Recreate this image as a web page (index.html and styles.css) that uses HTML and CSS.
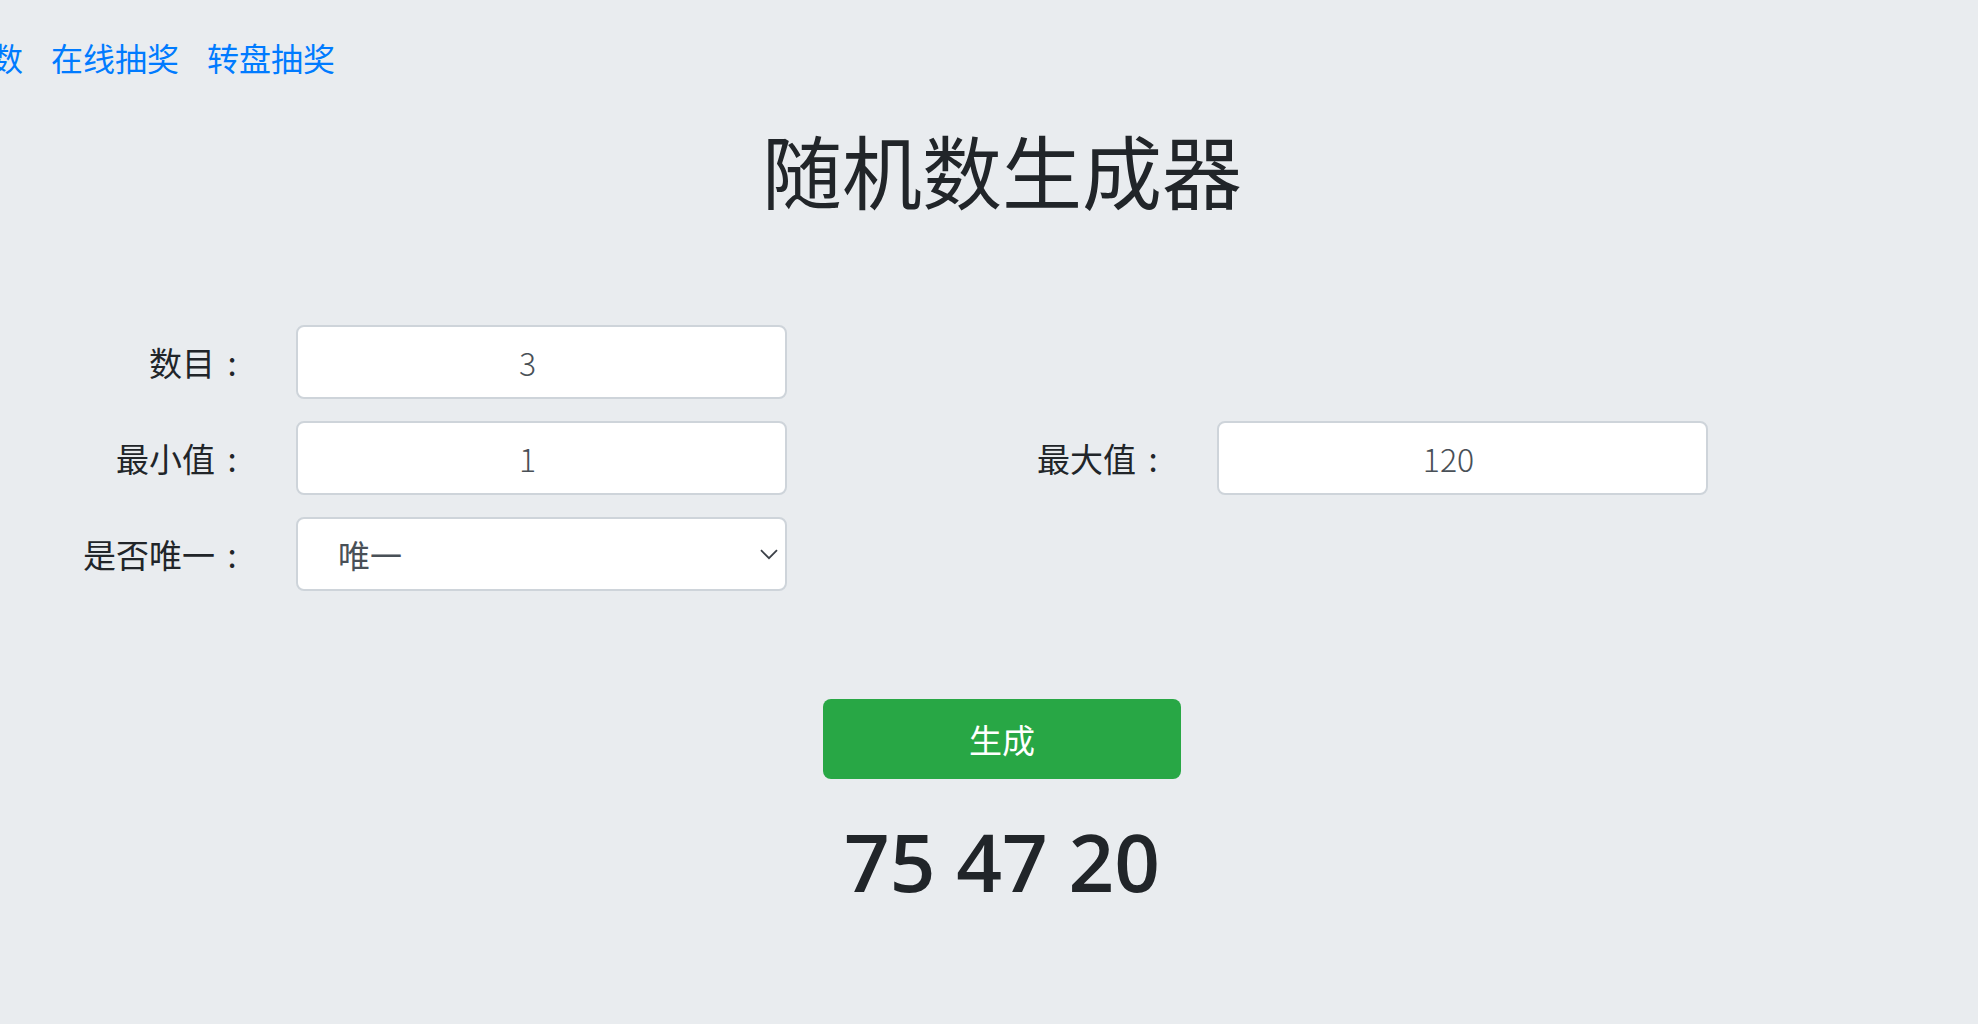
FILE: index.html
```html
<!DOCTYPE html>
<html lang="zh-CN">
<head>
<meta charset="utf-8">
<title>随机数生成器</title>
<link rel="stylesheet" href="styles.css">
</head>
<body>
<div class="page">
  <nav class="nav">
    <a class="nav-link" href="#">随机数</a>
    <a class="nav-link" href="#">在线抽奖</a>
    <a class="nav-link" href="#">转盘抽奖</a>
  </nav>
  <h1 class="title">随机数生成器</h1>
  <form class="form">
    <div class="form-row">
      <div class="field">
        <label class="lbl">数目<span class="colon">:</span></label>
        <input class="ctl num" type="text" value="3">
      </div>
    </div>
    <div class="form-row">
      <div class="field">
        <label class="lbl">最小值<span class="colon">:</span></label>
        <input class="ctl num" type="text" value="1">
      </div>
      <div class="field">
        <label class="lbl">最大值<span class="colon">:</span></label>
        <input class="ctl num" type="text" value="120">
      </div>
    </div>
    <div class="form-row">
      <div class="field">
        <label class="lbl">是否唯一<span class="colon">:</span></label>
        <div class="select-wrap">
          <select class="ctl sel">
            <option>唯一</option>
            <option>不唯一</option>
          </select>
          <svg class="chev" width="18" height="11" viewBox="0 0 18 11"><path d="M1 1.2 L9 9.2 L17 1.2" fill="none" stroke="#3c4148" stroke-width="1.8"/></svg>
        </div>
      </div>
    </div>
  </form>
  <div class="actions">
    <button class="btn" type="button">生成</button>
  </div>
  <div class="result">75 47 20</div>
</div>
</body>
</html>
```
FILE: styles.css
```css
html, body {
  margin: 0;
  padding: 0;
  overflow: hidden;
  background: #e9ecef;
}
body {
  font-family: "Noto Sans CJK SC", "Noto Sans", sans-serif;
  color: #212529;
}
.page {
  width: 2004px;
  height: 1024px;
}
.nav {
  display: flex;
  gap: 28px;
  padding-top: 33px;
  margin-left: -73px;
}
.nav-link {
  font-size: 32px;
  line-height: 48px;
  color: #007bff;
  text-decoration: none;
}
.title {
  margin: 39px 0 0;
  font-size: 80px;
  line-height: 96px;
  font-weight: 400;
  text-align: center;
}
.form {
  margin-top: 109px;
  display: flex;
  flex-direction: column;
  gap: 22px;
}
.form-row {
  display: flex;
  gap: 134px;
}
.field {
  display: flex;
  align-items: center;
  gap: 47px;
}
.lbl {
  width: 249px;
  text-align: right;
  font-size: 33px;
  line-height: 48px;
  color: #212529;
}
.colon {
  display: inline-block;
  width: 34px;
  text-align: center;
}
.ctl {
  box-sizing: border-box;
  width: 491px;
  height: 74px;
  margin: 0;
  border: 2px solid #ced4da;
  border-radius: 8px;
  background: #fff;
  font-family: "Noto Sans CJK SC", sans-serif;
  font-weight: 300;
  font-size: 32px;
  color: #495057;
  text-align: center;
  outline: none;
}
.num {
  padding: 0 28px 0 0;
}
.select-wrap {
  position: relative;
  display: flex;
}
.sel {
  appearance: none;
  -webkit-appearance: none;
  text-align: left;
  padding: 0 0 0 40px;
  font-weight: 400;
}
.chev {
  position: absolute;
  right: 9px;
  top: 32px;
  pointer-events: none;
}
.actions {
  margin-top: 108px;
  display: flex;
  justify-content: center;
}
.btn {
  width: 358px;
  height: 80px;
  border: none;
  border-radius: 8px;
  background: #28a745;
  color: #fff;
  font-family: "Noto Sans CJK SC", sans-serif;
  font-size: 33px;
  padding: 0;
}
.result {
  margin-top: 34px;
  text-align: center;
  font-family: "Open Sans", "Noto Sans", sans-serif;
  font-weight: 600;
  font-size: 80px;
  line-height: 96px;
  color: #212529;
}
```
